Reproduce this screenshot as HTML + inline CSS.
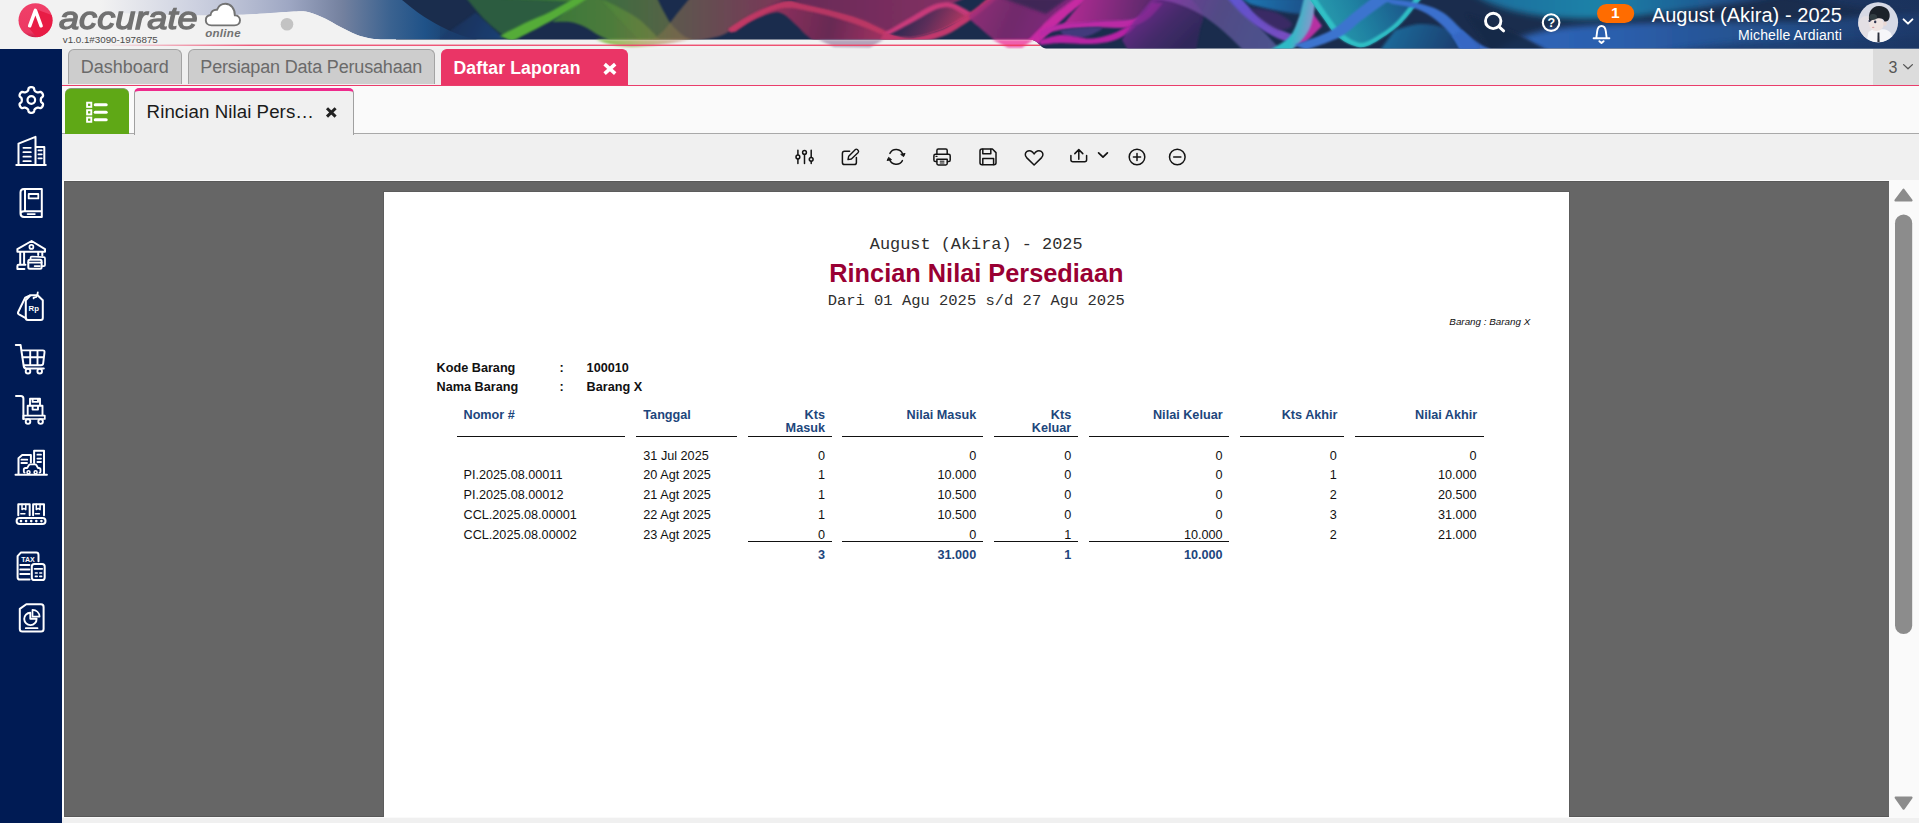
<!DOCTYPE html><html lang="id"><head><meta charset="utf-8"><title>Accurate Online - Rincian Nilai Persediaan</title><style>
*{box-sizing:border-box;margin:0;padding:0}
html,body{width:1919px;height:823px;overflow:hidden;background:#f0f0f0;font-family:"Liberation Sans",sans-serif;}
.abs{position:absolute}
.t{position:absolute;white-space:nowrap;line-height:0;height:0;}
.b{font-weight:bold}
.i{font-style:italic}
.m{font-family:"Liberation Mono",monospace}
.blue{color:#1d467c}
#hdr{position:absolute;left:0;top:0;width:1919px;height:49px;overflow:hidden}
#side{position:absolute;left:0;top:49px;width:62px;height:774px;background:#001b54}
#tabs{position:absolute;left:62px;top:49px;width:1857px;height:36px;background:#efefef}
.tab{position:absolute;top:49px;height:35px;border:1px solid #a3a3a3;border-bottom:none;border-radius:6px 6px 0 0;background:#cdcdcd;color:#6a6a6a;font-size:18px}
#pinkline{position:absolute;left:62px;top:85px;width:1857px;height:1px;background:#ea3d6b}
#subbar{position:absolute;left:62px;top:86px;width:1857px;height:48px;background:#fafafa;border-bottom:1px solid #a9a9a9}
#toolbar{position:absolute;left:62px;top:134px;width:1857px;height:47px;background:#f0f0f0;border-bottom:1px solid #fafafa}
#viewer{position:absolute;left:64px;top:181px;width:1825px;height:636px;background:#666;overflow:hidden;border-left:1px solid #5e5e5e;border-top:1px solid #595959}
#page{position:absolute;left:319px;top:10px;width:1185px;height:700px;background:#fff;box-shadow:0 0 0 1px #5c5c5c}
#sb{position:absolute;left:1889px;top:181px;width:30px;height:636px;background:#fafafa}
#bottom{position:absolute;left:62px;top:817px;width:1857px;height:6px;background:#f0f0f0;border-top:1px solid #fafafa}
.hl{position:absolute;height:1.4px;background:#111}
</style></head><body>
<svg id="hdr" class="abs" style="left:0;top:0" width="1919" height="49" viewBox="0 0 1919 49"><defs><clipPath id="cpM"><path d="M396 0H1919V48.5H1046C1040 48.5 1038 39.6 1030 39.6H396Z"/><path d="M100 0H402C405.0 2.3 413.7 9.7 420.0 14.0C426.3 18.3 433.3 22.5 440.0 26.0C446.7 29.5 453.7 32.7 460.0 35.0C466.3 37.3 475.0 38.8 478.0 39.6L387 39.6C384.5 39.5 377.2 39.6 372.0 38.8C366.8 37.9 361.3 36.5 356.0 34.5C350.7 32.5 345.2 29.5 340.0 26.8C334.8 24.1 330.2 20.9 325.0 18.5C319.8 16.1 314.2 13.5 309.0 12.3C303.8 11.1 304.3 11.1 294.0 11.5C283.7 11.9 262.7 13.9 247.0 14.6C231.3 15.2 224.5 15.7 200.0 15.4C175.5 15.1 116.7 13.4 100.0 13.0Z"/></clipPath><clipPath id="cpR"><rect x="1430" y="0" width="489" height="48.5"/></clipPath><filter id="b3" x="-5%" y="-60%" width="110%" height="220%"><feGaussianBlur stdDeviation="3"/></filter><filter id="b2" x="-5%" y="-60%" width="110%" height="220%"><feGaussianBlur stdDeviation="1.6"/></filter><filter id="b1" x="-5%" y="-60%" width="110%" height="220%"><feGaussianBlur stdDeviation="0.8"/></filter><linearGradient id="g1" gradientUnits="userSpaceOnUse" x1="1490" y1="0" x2="1919" y2="0"><stop offset="0" stop-color="#2f68bc"/><stop offset="0.3" stop-color="#2b5eac"/><stop offset="0.6" stop-color="#25528f"/><stop offset="1" stop-color="#20467f"/></linearGradient><linearGradient id="g2" gradientUnits="userSpaceOnUse" x1="1470" y1="0" x2="1790" y2="0"><stop offset="0" stop-color="#1c6c9c"/><stop offset="0.4" stop-color="#1a82a8"/><stop offset="0.8" stop-color="#21548f"/><stop offset="1" stop-color="#1e4279"/></linearGradient><linearGradient id="g3" gradientUnits="userSpaceOnUse" x1="1780" y1="0" x2="1919" y2="0"><stop offset="0" stop-color="#1a2f58" stop-opacity="0"/><stop offset="1" stop-color="#1a2f58" stop-opacity="0.55"/></linearGradient><linearGradient id="g4" gradientUnits="userSpaceOnUse" x1="100" y1="0" x2="478" y2="0"><stop offset="0" stop-color="#c4c9dd" stop-opacity="0"/><stop offset="0.25" stop-color="#c4c9dc" stop-opacity="0.8"/><stop offset="0.5" stop-color="#9ea7c3" stop-opacity="1"/><stop offset="0.64" stop-color="#74819f" stop-opacity="1"/><stop offset="0.77" stop-color="#3a6290" stop-opacity="1"/><stop offset="0.86" stop-color="#1f5288" stop-opacity="1"/><stop offset="0.94" stop-color="#1b3f6c" stop-opacity="1"/><stop offset="1" stop-color="#1a2d4d" stop-opacity="1"/></linearGradient><linearGradient id="g5" gradientUnits="userSpaceOnUse" x1="450" y1="14" x2="500" y2="40"><stop offset="0" stop-color="#1b3768"/><stop offset="1" stop-color="#2062b2"/></linearGradient><linearGradient id="g6" gradientUnits="userSpaceOnUse" x1="550" y1="0" x2="665" y2="0"><stop offset="0" stop-color="#438a36"/><stop offset="0.55" stop-color="#5a9038"/><stop offset="1" stop-color="#8a8a44"/></linearGradient><linearGradient id="g7" gradientUnits="userSpaceOnUse" x1="610" y1="0" x2="690" y2="0"><stop offset="0" stop-color="#5a9838"/><stop offset="1" stop-color="#8a8246"/></linearGradient><linearGradient id="g8" gradientUnits="userSpaceOnUse" x1="655" y1="0" x2="790" y2="0"><stop offset="0" stop-color="#86804a"/><stop offset="0.35" stop-color="#9a6a56"/><stop offset="0.7" stop-color="#b0505e"/><stop offset="1" stop-color="#c63c62"/></linearGradient><linearGradient id="g9" gradientUnits="userSpaceOnUse" x1="740" y1="10" x2="890" y2="40"><stop offset="0" stop-color="#d03864"/><stop offset="0.3" stop-color="#98305c"/><stop offset="0.6" stop-color="#742a56"/><stop offset="1" stop-color="#c03466"/></linearGradient><linearGradient id="g10" gradientUnits="userSpaceOnUse" x1="800" y1="0" x2="950" y2="0"><stop offset="0" stop-color="#9a2c5e"/><stop offset="1" stop-color="#c23272"/></linearGradient><linearGradient id="g11" gradientUnits="userSpaceOnUse" x1="905" y1="10" x2="950" y2="38"><stop offset="0" stop-color="#2b2950"/><stop offset="0.5" stop-color="#6a2f5c"/><stop offset="1" stop-color="#c03a64"/></linearGradient><linearGradient id="g12" gradientUnits="userSpaceOnUse" x1="965" y1="0" x2="1060" y2="40"><stop offset="0" stop-color="#c43088"/><stop offset="0.5" stop-color="#922c78"/><stop offset="1" stop-color="#a82c92"/></linearGradient><linearGradient id="g13" gradientUnits="userSpaceOnUse" x1="1075" y1="0" x2="1155" y2="18"><stop offset="0" stop-color="#c42c9c"/><stop offset="1" stop-color="#5c2a6c"/></linearGradient><linearGradient id="g14" gradientUnits="userSpaceOnUse" x1="1140" y1="0" x2="1185" y2="47"><stop offset="0" stop-color="#9c2eae"/><stop offset="0.55" stop-color="#5c2a7a"/><stop offset="1" stop-color="#3a2860"/></linearGradient><linearGradient id="g15" gradientUnits="userSpaceOnUse" x1="1160" y1="0" x2="1270" y2="47"><stop offset="0" stop-color="#a648c2"/><stop offset="0.5" stop-color="#7460aa"/><stop offset="1" stop-color="#6c6cb6"/></linearGradient><linearGradient id="g16" gradientUnits="userSpaceOnUse" x1="1229" y1="0" x2="1291" y2="43"><stop offset="0" stop-color="#6a5ce4"/><stop offset="1" stop-color="#8a50d0"/></linearGradient><linearGradient id="g17" gradientUnits="userSpaceOnUse" x1="1240" y1="0" x2="1300" y2="14"><stop offset="0" stop-color="#1c86c6"/><stop offset="1" stop-color="#1a5c98"/></linearGradient><linearGradient id="g18" gradientUnits="userSpaceOnUse" x1="1292" y1="30" x2="1312" y2="34"><stop offset="0" stop-color="#30d2da"/><stop offset="1" stop-color="#a2a8e2"/></linearGradient><linearGradient id="g19" gradientUnits="userSpaceOnUse" x1="1325" y1="42" x2="1410" y2="0"><stop offset="0" stop-color="#2cb4c0"/><stop offset="0.45" stop-color="#2090b0"/><stop offset="1" stop-color="#1b5a92"/></linearGradient><linearGradient id="g20" gradientUnits="userSpaceOnUse" x1="1400" y1="10" x2="1470" y2="40"><stop offset="0" stop-color="#1f7cb0"/><stop offset="1" stop-color="#1c3e74"/></linearGradient><linearGradient id="g21" gradientUnits="userSpaceOnUse" x1="600" y1="0" x2="690" y2="0"><stop offset="0" stop-color="#7cc043" stop-opacity="0.9"/><stop offset="0.45" stop-color="#a8a458" stop-opacity="0.75"/><stop offset="1" stop-color="#c0806a" stop-opacity="0.5"/></linearGradient><linearGradient id="pk" gradientUnits="userSpaceOnUse" x1="100" y1="0" x2="1040" y2="0"><stop offset="0" stop-color="#ee4a6e" stop-opacity="0"/><stop offset="0.16" stop-color="#ee4a6e" stop-opacity="1"/><stop offset="1" stop-color="#ee3a5e"/></linearGradient></defs><rect x="0" y="0" width="1919" height="49" fill="#f2f2f2"/><path d="M396 0H1919V48.5H1046C1040 48.5 1038 39.6 1030 39.6H396Z" fill="#1a2d4d"/><g clip-path="url(#cpM)"><g clip-path="url(#cpR)"><path d="M1490 56 C1520 30 1560 26 1620 24 C1700 20 1780 24 1830 20 C1870 16 1900 12 1930 8 V56Z" fill="url(#g1)" filter="url(#b3)"/><path d="M1470 -8 C1500 14 1560 24 1640 16 C1700 8 1740 4 1790 -8Z" fill="url(#g2)" filter="url(#b3)"/><path d="M1650 56 C1720 38 1800 42 1930 36 V56Z" fill="#1e3c70" opacity="0.8" filter="url(#b3)"/><path d="M1780 -8 H1930 V14 C1890 12 1840 6 1780 -8Z" fill="#1c3765" opacity="0.9" filter="url(#b3)"/><path d="M1466 14 C1490 20 1520 34 1550 52 H1490 C1484 40 1474 28 1466 14Z" fill="#182a4a" opacity="0.9" filter="url(#b2)"/><path d="M1780 0H1919V49H1780Z" fill="url(#g3)"/></g><path d="M100 0H402C405.0 2.3 413.7 9.7 420.0 14.0C426.3 18.3 433.3 22.5 440.0 26.0C446.7 29.5 453.7 32.7 460.0 35.0C466.3 37.3 475.0 38.8 478.0 39.6L387 39.6C384.5 39.5 377.2 39.6 372.0 38.8C366.8 37.9 361.3 36.5 356.0 34.5C350.7 32.5 345.2 29.5 340.0 26.8C334.8 24.1 330.2 20.9 325.0 18.5C319.8 16.1 314.2 13.5 309.0 12.3C303.8 11.1 304.3 11.1 294.0 11.5C283.7 11.9 262.7 13.9 247.0 14.6C231.3 15.2 224.5 15.7 200.0 15.4C175.5 15.1 116.7 13.4 100.0 13.0Z" fill="url(#g4)"/><path d="M438.0 39.6L476.0 12.5L505.0 39.6Z" fill="url(#g5)" opacity="0.45" filter="url(#b1)"/><path d="M466.0 -2.0C469.2 1.7 478.7 13.7 485.0 20.0C491.3 26.3 499.2 32.7 504.0 36.0C508.8 39.3 509.7 41.0 514.0 40.0C518.3 39.0 524.0 33.8 530.0 30.0C536.0 26.2 542.0 22.3 550.0 17.0C558.0 11.7 592.0 1.2 578.0 -2.0C564.0 -5.2 484.7 -2.0 466.0 -2.0Z" fill="#35733b" opacity="0.8" filter="url(#b1)"/><path d="M500 -2H600C603.3 -0.3 613.3 4.3 620.0 8.0C626.7 11.7 633.3 14.7 640.0 20.0C646.7 25.3 656.7 36.7 660.0 40.0L640 46L619 44C615.8 42.7 605.7 38.8 600.0 36.0C594.3 33.2 590.0 29.3 585.0 27.0C580.0 24.7 575.5 22.8 570.0 22.0C564.5 21.2 555.0 22.0 552.0 22.0L578 2Z" fill="url(#g6)" opacity="0.95" filter="url(#b1)"/><path d="M500.0 36.0C504.2 33.8 516.7 27.0 525.0 23.0C533.3 19.0 541.7 16.2 550.0 12.0C558.3 7.8 570.8 0.3 575.0 -2.0L588.0 -2.0C583.8 0.7 571.3 9.0 563.0 14.0C554.7 19.0 546.5 23.5 538.0 28.0C529.5 32.5 516.3 38.8 512.0 41.0Z" fill="#5fc234" filter="url(#b1)"/><path d="M600 -2H657C658.2 0.3 661.5 7.5 664.0 12.0C666.5 16.5 668.7 21.0 672.0 25.0C675.3 29.0 680.0 33.3 684.0 36.0C688.0 38.7 694.0 40.2 696.0 41.0H640Z" fill="url(#g7)" opacity="0.7" filter="url(#b1)"/><path d="M650 42C652.3 40.0 659.7 34.5 664.0 30.0C668.3 25.5 671.7 20.3 676.0 15.0C680.3 9.7 687.7 0.8 690.0 -2.0H790C786.0 -0.3 772.7 4.7 766.0 8.0C759.3 11.3 755.2 14.7 750.0 18.0C744.8 21.3 740.0 25.0 735.0 28.0C730.0 31.0 726.5 33.8 720.0 36.0C713.5 38.2 700.0 40.2 696.0 41.0Z" fill="url(#g8)" opacity="0.68" filter="url(#b1)"/><path d="M728 30C730.8 28.2 739.3 22.3 745.0 19.0C750.7 15.7 756.8 12.5 762.0 10.0C767.2 7.5 771.7 5.5 776.0 4.0C780.3 2.5 784.0 1.2 788.0 1.0C792.0 0.8 793.0 1.5 800.0 3.0C807.0 4.5 820.0 7.3 830.0 10.0C840.0 12.7 850.0 15.2 860.0 19.0C870.0 22.8 882.5 29.8 890.0 33.0C897.5 36.2 902.5 37.2 905.0 38.0L890 42H815C813.3 40.7 808.3 37.0 805.0 34.0C801.7 31.0 798.7 27.3 795.0 24.0C791.3 20.7 786.8 15.8 783.0 14.0C779.2 12.2 777.2 11.8 772.0 13.0C766.8 14.2 758.2 17.8 752.0 21.0C745.8 24.2 737.8 30.2 735.0 32.0Z" fill="url(#g9)" filter="url(#b1)"/><path d="M728.0 29.0C730.8 27.2 739.3 21.3 745.0 18.0C750.7 14.7 756.5 11.5 762.0 9.0C767.5 6.5 773.3 4.3 778.0 3.0C782.7 1.7 785.5 0.8 790.0 1.0C794.5 1.2 798.0 2.5 805.0 4.0C812.0 5.5 822.5 7.5 832.0 10.0C841.5 12.5 852.0 15.2 862.0 19.0C872.0 22.8 887.0 30.7 892.0 33.0L888.0 37.0C883.0 35.0 867.8 28.5 858.0 25.0C848.2 21.5 838.2 18.5 829.0 16.0C819.8 13.5 809.5 11.3 803.0 10.0C796.5 8.7 794.2 8.2 790.0 8.0C785.8 7.8 782.3 8.0 778.0 9.0C773.7 10.0 769.0 11.8 764.0 14.0C759.0 16.2 753.5 18.8 748.0 22.0C742.5 25.2 733.8 31.2 731.0 33.0Z" fill="#e03c6a" opacity="0.85" filter="url(#b1)"/><path d="M792 -2H965C962.3 -0.8 954.2 3.3 949.0 5.0C943.8 6.7 939.7 5.7 934.0 8.0C928.3 10.3 922.3 14.8 915.0 19.0C907.7 23.2 894.2 30.7 890.0 33.0C885.0 30.7 870.0 22.8 860.0 19.0C850.0 15.2 840.0 12.7 830.0 10.0C820.0 7.3 806.3 5.0 800.0 3.0C793.7 1.0 793.3 -1.2 792.0 -2.0Z" fill="url(#g10)" opacity="0.72" filter="url(#b1)"/><path d="M888.0 34.0C892.5 31.5 907.3 23.3 915.0 19.0C922.7 14.7 928.3 10.2 934.0 8.0C939.7 5.8 944.3 4.9 949.0 5.6C953.7 6.3 958.8 10.3 962.0 12.0C965.2 13.7 967.0 15.3 968.0 16.0L968.0 16.0C963.3 18.3 949.7 26.4 940.0 30.0C930.3 33.6 918.7 36.8 910.0 37.5C901.3 38.2 891.7 34.6 888.0 34.0Z" fill="url(#g11)"/><path d="M884.0 33.0C888.8 30.2 904.8 20.7 913.0 16.0C921.2 11.3 926.8 7.2 933.0 5.0C939.2 2.8 944.7 1.8 950.0 2.5C955.3 3.2 961.0 6.9 965.0 9.0C969.0 11.1 972.5 14.0 974.0 15.0L968.0 18.0C966.8 17.2 964.2 14.8 961.0 13.0C957.8 11.2 953.3 8.0 949.0 7.5C944.7 7.0 940.5 7.8 935.0 10.0C929.5 12.2 923.7 16.3 916.0 20.5C908.3 24.7 893.5 32.6 889.0 35.0Z" fill="#e43c82" filter="url(#b1)"/><path d="M884.0 33.0C888.3 33.8 900.7 38.0 910.0 37.5C919.3 37.0 932.0 32.9 940.0 30.0C948.0 27.1 952.2 23.5 958.0 20.0C963.8 16.5 970.0 12.7 975.0 9.0C980.0 5.3 985.8 -0.2 988.0 -2.0L998.0 -2.0C995.3 0.2 987.8 6.5 982.0 11.0C976.2 15.5 969.7 20.8 963.0 25.0C956.3 29.2 950.5 33.5 942.0 36.5C933.5 39.5 922.3 42.4 912.0 43.0C901.7 43.6 885.3 40.5 880.0 40.0Z" fill="#dc3a72" filter="url(#b1)"/><path d="M992 -2C989.5 -0.2 980.8 5.8 977.0 9.0C973.2 12.2 968.5 13.8 969.0 17.0C969.5 20.2 975.8 24.2 980.0 28.0C984.2 31.8 991.7 38.0 994.0 40.0L1012 48L1027 48C1029.2 45.5 1035.8 37.8 1040.0 33.0C1044.2 28.2 1047.7 23.2 1052.0 19.0C1056.3 14.8 1061.0 11.5 1066.0 8.0C1071.0 4.5 1079.3 -0.3 1082.0 -2.0Z" fill="url(#g12)" opacity="0.85" filter="url(#b1)"/><path d="M1002.0 -2.0L1046.0 14.0L1068.0 -2.0Z" fill="#3a2852" opacity="0.85" filter="url(#b2)"/><path d="M1020.0 48.0C1022.8 45.2 1031.8 36.2 1037.0 31.0C1042.2 25.8 1046.3 21.2 1051.0 17.0C1055.7 12.8 1060.8 9.2 1065.0 6.0C1069.2 2.8 1074.2 -0.7 1076.0 -2.0L1092.0 -2.0C1089.2 -0.2 1080.2 5.2 1075.0 9.0C1069.8 12.8 1065.5 16.8 1061.0 21.0C1056.5 25.2 1052.3 29.5 1048.0 34.0C1043.7 38.5 1037.2 45.7 1035.0 48.0Z" fill="#e22cb0" filter="url(#b1)"/><path d="M1085 -2H1162C1160.0 -0.3 1154.0 4.8 1150.0 8.0C1146.0 11.2 1143.0 14.8 1138.0 17.0C1133.0 19.2 1126.8 20.2 1120.0 21.0C1113.2 21.8 1106.7 21.2 1097.0 22.0C1087.3 22.8 1067.8 25.3 1062.0 26.0Z" fill="url(#g13)" filter="url(#b1)"/><path d="M1040.0 31.0C1043.3 29.8 1050.5 25.7 1060.0 24.0C1069.5 22.3 1084.5 22.0 1097.0 21.0C1109.5 20.0 1125.8 21.0 1135.0 18.0C1144.2 15.0 1149.2 5.5 1152.0 3.0L1163.0 3.0C1160.5 5.7 1153.8 14.9 1148.0 19.0C1142.2 23.1 1136.5 26.1 1128.0 27.5C1119.5 28.9 1108.3 27.1 1097.0 27.5C1085.7 27.9 1069.5 28.4 1060.0 30.0C1050.5 31.6 1043.3 35.8 1040.0 37.0Z" fill="#d42cb4" filter="url(#b1)"/><path d="M1060.0 30.5C1063.3 30.1 1073.0 28.4 1080.0 28.0C1087.0 27.6 1100.7 26.7 1102.0 28.0C1103.3 29.3 1093.7 34.3 1088.0 36.0C1082.3 37.7 1072.7 38.9 1068.0 38.0C1063.3 37.1 1061.3 31.8 1060.0 30.5Z" fill="#4a3c84" filter="url(#b1)"/><path d="M1040.0 40.0C1043.3 39.2 1053.7 35.5 1060.0 35.0C1066.3 34.5 1072.7 36.4 1078.0 37.0C1083.3 37.6 1086.3 39.0 1092.0 38.5C1097.7 38.0 1105.7 36.2 1112.0 34.0C1118.3 31.8 1127.0 26.5 1130.0 25.0L1136.0 26.0C1134.5 27.3 1131.0 31.5 1127.0 34.0C1123.0 36.5 1118.2 39.3 1112.0 41.0C1105.8 42.7 1098.7 43.7 1090.0 44.0C1081.3 44.3 1068.3 42.8 1060.0 43.0C1051.7 43.2 1043.3 44.7 1040.0 45.0Z" fill="#d022b2" filter="url(#b1)"/><path d="M1122 40C1123.7 37.3 1127.8 29.8 1132.0 24.0C1136.2 18.2 1143.5 9.3 1147.0 5.0C1150.5 0.7 1152.0 -0.8 1153.0 -2.0H1190C1192.2 0.7 1201.3 8.7 1203.0 14.0C1204.7 19.3 1201.2 24.0 1200.0 30.0C1198.8 36.0 1196.7 46.7 1196.0 50.0H1128Z" fill="url(#g14)" opacity="0.78" filter="url(#b1)"/><path d="M1152.0 -2.0C1155.8 -1.2 1167.0 0.3 1175.0 3.0C1183.0 5.7 1192.2 9.5 1200.0 14.0C1207.8 18.5 1214.8 24.0 1222.0 30.0C1229.2 36.0 1239.5 46.7 1243.0 50.0L1281.0 50.0C1277.8 46.7 1268.0 36.0 1262.0 30.0C1256.0 24.0 1250.5 19.3 1245.0 14.0C1239.5 8.7 1231.7 0.7 1229.0 -2.0Z" fill="url(#g15)" opacity="0.72" filter="url(#b1)"/><path d="M1227.0 -2.0C1229.5 0.7 1236.8 9.2 1242.0 14.0C1247.2 18.8 1252.5 23.2 1258.0 27.0C1263.5 30.8 1269.5 34.3 1275.0 37.0C1280.5 39.7 1288.3 42.0 1291.0 43.0L1300.0 37.0C1298.0 36.3 1293.0 35.2 1288.0 33.0C1283.0 30.8 1275.7 27.5 1270.0 24.0C1264.3 20.5 1258.8 16.3 1254.0 12.0C1249.2 7.7 1243.2 0.3 1241.0 -2.0Z" fill="url(#g16)" filter="url(#b1)"/><path d="M1241 -2H1322L1300 14C1280 12 1262 8 1250 4Z" fill="url(#g17)" filter="url(#b2)"/><path d="M1250.0 8.0C1254.2 8.7 1268.0 9.3 1275.0 12.0C1282.0 14.7 1291.2 21.0 1292.0 24.0C1292.8 27.0 1285.0 30.7 1280.0 30.0C1275.0 29.3 1267.0 23.7 1262.0 20.0C1257.0 16.3 1252.0 10.0 1250.0 8.0Z" fill="#4a2a70" opacity="0.8" filter="url(#b2)"/><path d="M1300.0 18.0L1312.0 12.0L1322.0 26.0L1306.0 42.0L1290.0 47.0Z" fill="#d030b0" filter="url(#b1)"/><path d="M1270.0 50.0C1272.7 48.3 1282.0 43.3 1286.0 40.0C1290.0 36.7 1291.7 34.3 1294.0 30.0C1296.3 25.7 1298.3 19.3 1300.0 14.0C1301.7 8.7 1303.3 0.7 1304.0 -2.0L1316.0 -2.0C1315.7 0.3 1315.0 7.0 1314.0 12.0C1313.0 17.0 1312.0 23.3 1310.0 28.0C1308.0 32.7 1305.0 36.3 1302.0 40.0C1299.0 43.7 1293.7 48.3 1292.0 50.0Z" fill="url(#g18)" filter="url(#b1)"/><path d="M1309 -2C1311.5 1.5 1319.5 12.8 1324.0 19.0C1328.5 25.2 1331.3 30.7 1336.0 35.0C1340.7 39.3 1346.8 43.2 1352.0 45.0C1357.2 46.8 1360.3 48.3 1367.0 46.0C1373.7 43.7 1385.7 35.5 1392.0 31.0C1398.3 26.5 1400.8 23.5 1405.0 19.0C1409.2 14.5 1414.2 7.5 1417.0 4.0C1419.8 0.5 1421.2 -1.0 1422.0 -2.0Z" fill="url(#g19)"/><path d="M1309.0 -2.0C1311.5 1.5 1319.5 12.8 1324.0 19.0C1328.5 25.2 1331.3 30.7 1336.0 35.0C1340.7 39.3 1346.8 43.2 1352.0 45.0C1357.2 46.8 1360.3 48.3 1367.0 46.0C1373.7 43.7 1385.7 35.5 1392.0 31.0C1398.3 26.5 1400.8 23.5 1405.0 19.0C1409.2 14.5 1414.2 7.5 1417.0 4.0C1419.8 0.5 1421.2 -1.0 1422.0 -2.0L1414.0 -2.0C1413.5 -1.0 1413.3 0.7 1411.0 4.0C1408.7 7.3 1403.8 13.8 1400.0 18.0C1396.2 22.2 1393.7 25.0 1388.0 29.0C1382.3 33.0 1371.7 40.0 1366.0 42.0C1360.3 44.0 1358.2 42.7 1354.0 41.0C1349.8 39.3 1345.2 36.0 1341.0 32.0C1336.8 28.0 1333.2 22.7 1329.0 17.0C1324.8 11.3 1318.2 1.2 1316.0 -2.0Z" fill="#34dada" filter="url(#b1)"/><path d="M1395 30C1399.2 29.0 1411.7 24.3 1420.0 24.0C1428.3 23.7 1436.7 25.3 1445.0 28.0C1453.3 30.7 1463.8 36.3 1470.0 40.0C1476.2 43.7 1480.0 48.3 1482.0 50.0H1380Z" fill="url(#g20)" opacity="0.9" filter="url(#b2)"/><path d="M1294.0 45.0C1300.0 42.7 1320.2 36.3 1330.0 31.0C1339.8 25.7 1346.0 18.5 1353.0 13.0C1360.0 7.5 1368.8 0.5 1372.0 -2.0L1394.0 -2.0C1392.3 -1.0 1389.3 0.3 1384.0 4.0C1378.7 7.7 1369.3 14.5 1362.0 20.0C1354.7 25.5 1349.3 32.0 1340.0 37.0C1330.7 42.0 1311.7 47.8 1306.0 50.0Z" fill="#4280e4" filter="url(#b1)"/><path d="M1380.0 -2.0C1386.2 -1.2 1406.7 0.7 1417.0 3.0C1427.3 5.3 1434.5 7.5 1442.0 12.0C1449.5 16.5 1455.7 23.7 1462.0 30.0C1468.3 36.3 1477.0 46.7 1480.0 50.0L1460.0 50.0C1458.7 47.7 1456.0 41.0 1452.0 36.0C1448.0 31.0 1441.8 24.5 1436.0 20.0C1430.2 15.5 1424.3 11.7 1417.0 9.0C1409.7 6.3 1396.2 4.8 1392.0 4.0Z" fill="#3f7ce2" filter="url(#b1)"/><path d="M1462.0 30.0C1465.0 32.3 1475.0 40.7 1480.0 44.0C1485.0 47.3 1490.0 49.0 1492.0 50.0L1464.0 50.0C1463.7 50.0 1464.0 52.3 1462.0 50.0C1460.0 47.7 1453.7 38.3 1452.0 36.0Z" fill="#3a72d8" opacity="0.9" filter="url(#b1)"/><rect x="440" y="0" width="1040" height="49" fill="#1a2d4d" opacity="0.14"/></g><rect x="380" y="39.6" width="660" height="5" fill="#f9f9f9" opacity="0.0"/><path d="M596 39.6H690C670 44 650 47 632 47C618 47 606 44 596 39.6Z" fill="url(#g21)" filter="url(#b1)"/><path d="M818.0 39.6L884.0 39.6L870.0 47.6L834.0 47.0Z" fill="#7a5a86" opacity="0.5" filter="url(#b1)"/><path d="M992.0 39.6L1034.0 39.6L1022.0 47.8L1008.0 47.8Z" fill="#f03a9c" opacity="0.8" filter="url(#b1)"/><rect x="100" y="44.6" width="940" height="1.3" fill="url(#pk)"/></svg>
<svg class="abs" style="left:0;top:0" width="1919" height="48" viewBox="0 0 1919 48">
<defs><clipPath id="lgc"><circle cx="35.5" cy="20.2" r="17"/></clipPath><linearGradient id="lgg" x1="0" y1="0" x2="0" y2="1"><stop offset="0" stop-color="#f04069"/><stop offset="0.85" stop-color="#ec3862"/><stop offset="1" stop-color="#c8204a"/></linearGradient><radialGradient id="avg" cx="0.5" cy="0.35" r="0.6"><stop offset="0" stop-color="#3a3f4c"/><stop offset="0.55" stop-color="#6b7080"/><stop offset="1" stop-color="#d9dbe4"/></radialGradient><clipPath id="avc"><circle cx="1878.1" cy="22.3" r="19.9"/></clipPath><filter id="avb"><feGaussianBlur stdDeviation="0.55"/></filter></defs>
<circle cx="35.5" cy="20.2" r="17" fill="url(#lgg)"/>
<g clip-path="url(#lgc)"><path d="M35.4 9L43.5 12L60 18V45H43L28.6 27.6Z" fill="#e81c45"/></g>
<path d="M29.7 25.8L35.4 10.4L41.1 25.8" fill="none" stroke="#fff" stroke-width="3.5" stroke-linecap="round" stroke-linejoin="round"/>
<path d="M211.6 25.4H234.4C238 25.4 240 23 240 20.2C240 17.2 237.6 15.2 234.8 15.4C235 9 231 3.8 225.4 3.8C221.6 3.8 218.4 6.2 217 9.8C213.6 9.4 210.6 11.8 210.6 15C207.6 15.4 205.8 17.6 205.8 20.2C205.8 23 208 25.4 211.6 25.4Z" fill="#fff" stroke="#737373" stroke-width="1.9" stroke-linejoin="round"/>
<circle cx="287" cy="24.2" r="6.3" fill="#c3c3c3"/>
<circle cx="1493.2" cy="20.9" r="7.7" fill="none" stroke="#fff" stroke-width="2.9"/><path d="M1498.9 26.7L1503.6 30.8" stroke="#fff" stroke-width="3" stroke-linecap="round"/>
<circle cx="1551.1" cy="22.6" r="8.3" fill="none" stroke="#fff" stroke-width="2.1"/>
<text x="1551.2" y="27.3" text-anchor="middle" font-family="Liberation Sans, sans-serif" font-weight="bold" font-size="12.5" fill="#fff">?</text>
<rect x="1597" y="4" width="37.2" height="19" rx="9.5" fill="#ff6c00"/>
<text x="1615.4" y="18.2" text-anchor="middle" font-family="Liberation Sans, sans-serif" font-weight="bold" font-size="15.5" fill="#fff">1</text>
<path d="M1593.6 38.3H1609.4M1596.3 38L1597.2 31.2C1597.6 28 1599 26 1601.5 26C1604 26 1605.4 28 1605.8 31.2L1606.7 38M1599.4 41.2L1601.5 43L1603.6 41.2" fill="none" stroke="#fff" stroke-width="1.9" stroke-linecap="round" stroke-linejoin="round"/>
<circle cx="1878.1" cy="22.3" r="20" fill="#d6d9e5"/>
<g clip-path="url(#avc)"><g filter="url(#avb)"><ellipse cx="1866" cy="30" rx="9" ry="14" fill="#e3dfe4"/><path d="M1866 44L1868.5 32Q1873 28 1879 29.5Q1887 28 1891 33L1894 44Z" fill="#f6f6f9"/><ellipse cx="1876.4" cy="24" rx="7.4" ry="7" fill="#efe3e1"/><ellipse cx="1885" cy="23.4" rx="1.8" ry="2.4" fill="#ead8d4"/><path d="M1869.4 21.5C1867.5 13 1871.5 6 1879 6C1886.5 6 1890.5 11 1889.6 17C1889 20.5 1887 22 1884.5 21.5C1883.5 19 1881 17.8 1877 18.6C1873.5 19.4 1871 21 1869.4 21.5Z" fill="#1d212c"/><ellipse cx="1873" cy="17" rx="4" ry="3" fill="#3c4a4c" opacity="0.7"/><ellipse cx="1869.5" cy="20.9" rx="1" ry="1.2" fill="#3a3f5c"/><ellipse cx="1875.2" cy="21.9" rx="1.2" ry="1.3" fill="#2e3350"/><ellipse cx="1873.2" cy="27.4" rx="1.2" ry="0.6" fill="#d9a0a4"/><path d="M1877.6 32.4L1879.4 32.6L1879.6 42H1877.4Z" fill="#2a2d3a"/></g></g>
<path d="M1903.6 19.4L1908 23.6L1912.4 19.4" fill="none" stroke="#fff" stroke-width="2" stroke-linecap="round" stroke-linejoin="round"/>
</svg>
<span class="t i" style="font-size:31.00px;top:18.66px;left:58.60px;color:#717171;-webkit-text-stroke:1.3px #717171;transform:scaleX(1.165);transform-origin:0 0;">accurate</span>
<span class="t b i" style="font-size:11.50px;top:33.12px;left:205.20px;color:#717171;letter-spacing:0.3px;">online</span>
<span class="t " style="font-size:9.80px;top:39.60px;left:62.80px;color:#4a4a4a;letter-spacing:-0.02px;">v1.0.1#3090-1976875</span>
<span class="t " style="font-size:20.00px;top:14.87px;right:77.00px;color:#fff;letter-spacing:0.06px;">August (Akira) - 2025</span>
<span class="t " style="font-size:14.00px;top:34.65px;right:77.00px;color:#fff;letter-spacing:0.12px;">Michelle Ardianti</span>
<div id="side"></div>
<div class="abs" style="left:62px;top:49px;width:2px;height:774px;background:#fdfdfd"></div>
<svg class="abs" style="left:0;top:49px" width="62" height="774" viewBox="0 49 62 774" fill="none" stroke="#fff" stroke-width="2" stroke-linecap="round" stroke-linejoin="round">
<path d="M40.80 100.00 L40.82 99.50 L40.89 98.99 L41.00 98.46 L41.22 97.89 L42.12 97.10 L42.96 96.21 L43.04 95.49 L42.96 94.81 L42.76 94.16 L42.47 93.55 L42.09 92.99 L41.62 92.50 L41.07 92.09 L40.41 91.79 L39.22 92.08 L38.08 92.47 L37.48 92.36 L36.97 92.20 L36.49 92.00 L36.05 91.77 L35.63 91.51 L35.22 91.20 L34.82 90.83 L34.43 90.36 L34.20 89.18 L33.85 88.01 L33.27 87.58 L32.63 87.31 L31.97 87.15 L31.30 87.10 L30.63 87.15 L29.97 87.31 L29.33 87.58 L28.75 88.01 L28.40 89.18 L28.17 90.36 L27.78 90.83 L27.38 91.20 L26.97 91.51 L26.55 91.77 L26.11 92.00 L25.63 92.20 L25.12 92.36 L24.52 92.47 L23.38 92.08 L22.19 91.79 L21.53 92.09 L20.98 92.50 L20.51 92.99 L20.13 93.55 L19.84 94.16 L19.64 94.81 L19.56 95.49 L19.64 96.21 L20.48 97.10 L21.38 97.89 L21.60 98.46 L21.71 98.99 L21.78 99.50 L21.80 100.00 L21.78 100.50 L21.71 101.01 L21.60 101.54 L21.38 102.11 L20.48 102.90 L19.64 103.79 L19.56 104.51 L19.64 105.19 L19.84 105.84 L20.13 106.45 L20.51 107.01 L20.98 107.50 L21.53 107.91 L22.19 108.21 L23.38 107.92 L24.52 107.53 L25.12 107.64 L25.63 107.80 L26.11 108.00 L26.55 108.23 L26.97 108.49 L27.38 108.80 L27.78 109.17 L28.17 109.64 L28.40 110.82 L28.75 111.99 L29.33 112.42 L29.97 112.69 L30.63 112.85 L31.30 112.90 L31.97 112.85 L32.63 112.69 L33.27 112.42 L33.85 111.99 L34.20 110.82 L34.43 109.64 L34.82 109.17 L35.22 108.80 L35.63 108.49 L36.05 108.23 L36.49 108.00 L36.97 107.80 L37.48 107.64 L38.08 107.53 L39.22 107.92 L40.41 108.21 L41.07 107.91 L41.62 107.50 L42.09 107.01 L42.47 106.45 L42.76 105.84 L42.96 105.19 L43.04 104.51 L42.96 103.79 L42.12 102.90 L41.22 102.11 L41.00 101.54 L40.89 101.01 L40.82 100.50Z" stroke-width="2.3"/>
<circle cx="31.3" cy="100" r="3.8" stroke-width="2.2"/>
<path d="M16.3 165H45.8M18.5 165V143.6L35.5 136.9V165M35.5 147H44.3V165"/>
<path d="M23.4 147.8H30.8M23.4 152.2H30.8M23.4 156.7H30.8M23.4 161.2H30.8M38.4 150.3H41.8M38.4 154.3H41.8M38.4 158.3H41.8" stroke-width="1.8"/>
<path d="M41.8 211.2V188.9H24Q20.5 188.9 20.5 192.4V213.6Q20.5 217 24 217H41.8V211.2H24Q20.6 211.4 20.5 214M25 189V211"/>
<rect x="28.7" y="194" width="9.6" height="4.4" stroke-width="1.8"/>
<path d="M27.6 214.1H34.8" stroke-width="1.8"/>
<path d="M17.4 251.8V249.1L31.6 241L45 249.1V251.8Z"/>
<circle cx="31.4" cy="246.9" r="2" stroke-width="1.7"/>
<path d="M20.2 252V263.7M24.1 252V263.7M38.2 252V255M42.3 252V255.5"/>
<path d="M25.4 264.7H18.6Q17.4 264.7 17.4 266V269H24.4"/>
<rect x="28.3" y="259.8" width="13.3" height="9" rx="1.5"/>
<path d="M28.3 262.6H41.6M34.6 266.1H39.9" stroke-width="1.7"/>
<path d="M30.6 259V257.6Q30.6 256.5 31.8 256.5L43.8 257.2Q45 257.3 45 258.5V265Q45 266.2 43.8 266.2H42.4" stroke-width="1.7"/>
<path d="M25.8 300.2L30.4 295.2H37.6L42.8 300.2V318Q42.8 320 40.8 320H27.8Q25.8 320 25.8 318Z"/>
<path d="M29.5 295.6L25.2 297.6L18.2 312Q17.5 313.6 19 314.4L26.2 318.4"/>
<path d="M33.6 298.4Q33.2 297.6 34.6 297.4Q36.5 297.6 37.2 295.5L37.8 292.4" stroke-width="1.8"/>
<text x="28.6" y="311" font-family="Liberation Sans, sans-serif" font-size="7.8" font-weight="bold" fill="#fff" stroke="none">Rp</text>
<path d="M15.8 345.1H20.6L23.7 366Q24.1 368.6 26.5 368.6H43.8"/>
<path d="M21.8 350.4H42.8Q44.8 350.4 44.5 352.4L43.2 363.4Q43 365.2 41 365.2H24M22.7 357.3H43.8M30.2 350.4V365.2M37.5 350.4V365.2" stroke-width="1.9"/>
<circle cx="28" cy="371.2" r="2.3" stroke-width="1.9"/><circle cx="39.7" cy="371.2" r="2.3" stroke-width="1.9"/>
<path d="M16 396.1H20.9Q23.4 396.1 23.4 398.6V418.9"/>
<rect x="23.4" y="415.6" width="21.4" height="3.4" stroke-width="1.7"/>
<circle cx="28" cy="421.6" r="2.3" stroke-width="1.9"/><circle cx="40.6" cy="421.6" r="2.3" stroke-width="1.9"/>
<path d="M27.7 415V405.8H42.5V415M30 405.8V398.8H40V405.8M32.6 405.8V409.6H38V405.8M32.6 398.8V401.9H38V398.8" stroke-width="1.9"/>
<path d="M15.5 474.8H46.9M18.5 474.8V458.2L22.2 455.1H30.9V462.5M34.1 463V450.7H44V474.8"/>
<path d="M21.4 459.7H27.3M21.4 463H27M37.4 454.7H41M37.4 458.6H41M37.4 462H41" stroke-width="1.8"/>
<path d="M24.6 472.6Q23.8 472.6 23.8 471.6V469.6Q23.8 468 25.6 468H27.2L28.8 465.2Q29.3 464.4 30.3 464.4H35Q36 464.4 36.5 465.2L38 468H38.8Q40.5 468 40.5 469.6V471.6Q40.5 472.6 39.6 472.6" stroke-width="1.8"/>
<circle cx="28.5" cy="472.3" r="1.5" stroke-width="1.5"/><circle cx="35.6" cy="472.3" r="1.5" stroke-width="1.5"/>
<rect x="16.6" y="518.1" width="28.9" height="6" rx="3"/>
<circle cx="21" cy="521.1" r="1.3" fill="#fff" stroke="none"/>
<circle cx="26.1" cy="521.1" r="1.3" fill="#fff" stroke="none"/>
<circle cx="31.2" cy="521.1" r="1.3" fill="#fff" stroke="none"/>
<circle cx="36.3" cy="521.1" r="1.3" fill="#fff" stroke="none"/>
<circle cx="41.4" cy="521.1" r="1.3" fill="#fff" stroke="none"/>
<path d="M18.3 515.2V504.2H29.7V515.2M33.1 515.2V504.2H44V515.2"/>
<path d="M22 504.2V509.6L23.9 508.4L25.8 509.6V504.2M20.8 513.8H24.9M36.3 504.2V509.6L38.2 508.4L40.1 509.6V504.2M35.4 513.8H39.4" stroke-width="1.5"/>
<path d="M29.6 579.6H20Q17.6 579.6 17.6 577.2V556.2L20.8 552.6H36.2Q38.5 552.6 38.5 555V561.3"/>
<path d="M20.2 565H29.5M20.2 569.5H29.5M20.2 574H29.5" stroke-width="1.8"/>
<text x="21.2" y="561.5" font-family="Liberation Sans, sans-serif" font-size="6.3" font-weight="bold" fill="#fff" stroke="none" textLength="13.6" lengthAdjust="spacingAndGlyphs">TAX</text>
<rect x="31.8" y="564" width="12.9" height="16" rx="2.6"/>
<path d="M34.6 568.8H42.2" stroke-width="1.8"/>
<path d="M35.4 573H37.2M39.8 573H41.6M35.4 576.4H37.2M39.8 576.4H41.6" stroke-width="1.6"/>
<path d="M19.8 608.9L26.3 604.3H41Q43.6 604.3 43.6 606.9V629Q43.6 631.5 41 631.5H22.4Q19.8 631.5 19.8 629Z"/>
<path d="M30.3 612.7A6.2 6.2 0 1 0 36.6 618.7H30.3Z" stroke-width="1.9"/>
<path d="M32.5 616.6V609.8A7 7 0 0 1 39.6 616.6Z" stroke-width="1.7"/>
<path d="M25.8 628.2H37.5" stroke-width="1.8"/>
</svg>
<div id="tabs"></div>
<div class="tab" style="left:68px;width:114px"></div>
<div class="tab" style="left:188px;width:247px"></div>
<div class="tab" style="left:441px;width:187px;height:36.5px;background:#ea3566;border-color:#ea3566"></div>
<div class="abs" style="left:1873px;top:49px;width:46px;height:36px;background:#dcdcdc"></div>
<div id="pinkline"></div>
<div id="subbar"></div>
<div id="toolbar"></div>
<div class="abs" style="left:64.5px;top:88px;width:64px;height:46px;background:#5fa816;border-radius:6px 6px 0 0;border-top:1px solid #8a9a7a"></div>
<div class="abs" style="left:134px;top:88px;width:220px;height:47px;background:#f0f0f0;border:1px solid #a0a0a0;border-bottom:none;border-top:3px solid #ee2a8c;border-radius:5px 5px 0 0"></div>
<svg class="abs" style="left:780px;top:140px" width="420" height="34" viewBox="780 140 420 34" fill="none" stroke="#141414" stroke-width="1.5" stroke-linecap="round" stroke-linejoin="round">
<path d="M797.9 150.3V154.6M797.9 159.2V163.6M804.5 154.8V163.6M811.2 150.3V157M811.2 161.6V163.6"/>
<circle cx="797.9" cy="157" r="1.9"/><circle cx="804.5" cy="152.4" r="1.9"/><circle cx="811.2" cy="159.3" r="1.9"/>
<path d="M849.6 151.2H844.6Q842.4 151.2 842.4 153.4V162.4Q842.4 164.6 844.6 164.6H854.2Q856.4 164.6 856.4 162.4V157.4"/>
<path d="M848 159.6L848.7 156.2L855.4 149.5Q856.3 148.7 857.3 149.6L858.2 150.5Q859 151.5 858.2 152.4L851.4 159Z" stroke-width="1.4"/>
<path d="M889.6 159.6A7 7 0 0 0 902.4 160.6M902.8 154.4A7 7 0 0 0 889.9 153.4" />
<path d="M901 154.6L903.6 156.6L904.9 153.8Z" fill="#141414" stroke-width="1"/><path d="M887.3 160.2L888.6 157.4L891.2 159.4Z" fill="#141414" stroke-width="1"/>
<path d="M936.6 161.6H935.4Q933.9 161.6 933.9 160V155.8Q933.9 154.2 935.5 154.2H948.6Q950.2 154.2 950.2 155.8V160Q950.2 161.6 948.7 161.6H947.6"/>
<path d="M936.9 154V150.4Q936.9 149 938.3 149H945.8Q947.2 149 947.2 150.4V154M936.9 159.2H947.2V163.6Q947.2 165 945.8 165H938.3Q936.9 165 936.9 163.6Z"/>
<path d="M940.2 161.2H944M940.2 163H944" stroke-width="1"/><path d="M936 156.4H937" stroke-width="1.2"/>
<path d="M982 149H992.4L996 152.6V162.8Q996 164.8 994 164.8H982Q980 164.8 980 162.8V151Q980 149 982 149Z"/>
<path d="M982.8 149.2V153.8H990.8V149.2M982.8 164.6V158.6H993.6V164.6"/>
<path d="M1034.1 165L1026.6 157.6C1024.6 155.4 1025 152.6 1027 151.4C1029.4 150 1032.4 151 1034.1 154C1035.8 151 1038.8 150 1041.2 151.4C1043.2 152.6 1043.6 155.4 1041.6 157.6Z"/>
<path d="M1070.9 155.4V159.8Q1070.9 161.8 1072.9 161.8H1084.6Q1086.6 161.8 1086.6 159.8V155.4M1078.8 159.2V150M1074.8 153.6L1078.8 149.6L1082.8 153.6"/>
<path d="M1098.6 152.8L1103 157.2L1107.4 152.8" stroke-width="1.7"/>
<circle cx="1137" cy="157" r="7.8"/><path d="M1133.4 157H1140.6M1137 153.4V160.6"/>
<circle cx="1177.3" cy="157" r="7.8"/><path d="M1173.7 157H1180.9"/>
</svg>
<span class="t " style="font-size:18.00px;top:67.16px;left:80.80px;color:#6a6a6a;">Dashboard</span>
<span class="t " style="font-size:18.00px;top:67.16px;left:200.30px;color:#6a6a6a;letter-spacing:-0.17px;">Persiapan Data Perusahaan</span>
<span class="t b" style="font-size:17.60px;top:67.90px;left:453.50px;color:#fff;letter-spacing:0.14px;">Daftar Laporan</span>
<span class="t " style="font-size:18.70px;top:112.32px;left:146.60px;color:#1a1a1a;letter-spacing:0.07px;">Rincian Nilai Pers…</span>
<span class="t " style="font-size:16.00px;top:67.66px;left:1888.60px;color:#555;">3</span>
<div id="viewer"><div class="abs" style="left:0;bottom:0;width:1825px;height:1px;background:#585858"></div><div id="page"></div></div>
<div id="sb"></div>
<div id="bottom"></div>
<svg class="abs" style="left:62px;top:48px" width="1857" height="775" viewBox="62 48 1857 775">
<path d="M604.6 64.2L615.2 73.6M615.2 64.2L604.6 73.6" stroke="#fff" stroke-width="3.6" stroke-linecap="butt"/>
<path d="M327 108.2L335.6 116.6M335.6 108.2L327 116.6" stroke="#222" stroke-width="3" stroke-linecap="butt"/>
<path d="M1903.6 64.6L1908 68.8L1912.4 64.6" fill="none" stroke="#555" stroke-width="1.3" stroke-linecap="round" stroke-linejoin="round"/>
<rect x="87.1" y="102.7" width="4.2" height="4.2" fill="none" stroke="#fff" stroke-width="1.9"/>
<path d="M95.2 104.8H106.2" stroke="#fff" stroke-width="3" stroke-linecap="round"/>
<rect x="87.1" y="110.2" width="4.2" height="4.2" fill="none" stroke="#fff" stroke-width="1.9"/>
<path d="M95.2 112.3H106.2" stroke="#fff" stroke-width="3" stroke-linecap="round"/>
<rect x="87.1" y="117.6" width="4.2" height="4.2" fill="none" stroke="#fff" stroke-width="1.9"/>
<path d="M95.2 119.7H106.2" stroke="#fff" stroke-width="3" stroke-linecap="round"/>
<path d="M1903.5 189.6L1911.6 200.4H1895.4Z" fill="#8c8c8c" stroke="#8c8c8c" stroke-width="2" stroke-linejoin="round"/>
<rect x="1895" y="214.6" width="17.2" height="419.4" rx="8.6" fill="#8c8c8c"/>
<path d="M1903.6 808.8L1911.6 797.6H1895.6Z" fill="#8c8c8c" stroke="#8c8c8c" stroke-width="2" stroke-linejoin="round"/>
</svg>
<span class="t m" style="font-size:16.89px;top:244.70px;left:976.20px;transform:translateX(-50%);color:#2e2e2e;">August (Akira) - 2025</span>
<span class="t b" style="font-size:25.33px;top:273.42px;left:976.40px;transform:translateX(-50%);color:#990033;">Rincian Nilai Persediaan</span>
<span class="t m" style="font-size:15.48px;top:301.17px;left:976.20px;transform:translateX(-50%);color:#2e2e2e;">Dari 01 Agu 2025 s/d 27 Agu 2025</span>
<span class="t i" style="font-size:9.85px;top:321.59px;right:388.70px;color:#111;">Barang : Barang X</span>
<span class="t b" style="font-size:12.67px;top:367.61px;left:436.60px;color:#111;">Kode Barang</span>
<span class="t b" style="font-size:12.67px;top:367.61px;left:559.50px;color:#111;">:</span>
<span class="t b" style="font-size:12.67px;top:367.61px;left:586.60px;color:#111;">100010</span>
<span class="t b" style="font-size:12.67px;top:387.01px;left:436.60px;color:#111;">Nama Barang</span>
<span class="t b" style="font-size:12.67px;top:387.01px;left:559.50px;color:#111;">:</span>
<span class="t b" style="font-size:12.67px;top:387.01px;left:586.60px;color:#111;">Barang X</span>
<span class="t b blue" style="font-size:12.67px;top:414.91px;left:463.50px;">Nomor #</span>
<span class="t b blue" style="font-size:12.67px;top:414.91px;left:643.30px;">Tanggal</span>
<span class="t b blue" style="font-size:12.67px;top:414.91px;right:1094.00px;">Kts</span>
<span class="t b blue" style="font-size:12.67px;top:428.31px;right:1094.00px;">Masuk</span>
<span class="t b blue" style="font-size:12.67px;top:414.91px;right:942.80px;">Nilai Masuk</span>
<span class="t b blue" style="font-size:12.67px;top:414.91px;right:847.80px;">Kts</span>
<span class="t b blue" style="font-size:12.67px;top:428.31px;right:847.80px;">Keluar</span>
<span class="t b blue" style="font-size:12.67px;top:414.91px;right:696.40px;">Nilai Keluar</span>
<span class="t b blue" style="font-size:12.67px;top:414.91px;right:581.50px;">Kts Akhir</span>
<span class="t b blue" style="font-size:12.67px;top:414.91px;right:441.80px;">Nilai Akhir</span>
<div class="hl" style="left:456.5px;top:435.8px;width:168.7px"></div>
<div class="hl" style="left:636.0px;top:435.8px;width:100.8px"></div>
<div class="hl" style="left:747.7px;top:435.8px;width:84.1px"></div>
<div class="hl" style="left:842.4px;top:435.8px;width:140.3px"></div>
<div class="hl" style="left:993.7px;top:435.8px;width:84.1px"></div>
<div class="hl" style="left:1089.0px;top:435.8px;width:140.0px"></div>
<div class="hl" style="left:1240.0px;top:435.8px;width:104.0px"></div>
<div class="hl" style="left:1355.0px;top:435.8px;width:129.0px"></div>
<div class="hl" style="left:747.7px;top:540.6px;width:84.1px"></div>
<div class="hl" style="left:842.4px;top:540.6px;width:140.3px"></div>
<div class="hl" style="left:993.7px;top:540.6px;width:84.1px"></div>
<div class="hl" style="left:1089.0px;top:540.6px;width:140.0px"></div>
<span class="t " style="font-size:12.67px;top:455.61px;left:643.30px;color:#111;">31 Jul 2025</span>
<span class="t " style="font-size:12.67px;top:455.61px;right:1094.00px;color:#111;">0</span>
<span class="t " style="font-size:12.67px;top:455.61px;right:942.80px;color:#111;">0</span>
<span class="t " style="font-size:12.67px;top:455.61px;right:847.80px;color:#111;">0</span>
<span class="t " style="font-size:12.67px;top:455.61px;right:696.40px;color:#111;">0</span>
<span class="t " style="font-size:12.67px;top:455.61px;right:582.20px;color:#111;">0</span>
<span class="t " style="font-size:12.67px;top:455.61px;right:442.40px;color:#111;">0</span>
<span class="t " style="font-size:12.67px;top:475.41px;left:463.50px;color:#111;">PI.2025.08.00011</span>
<span class="t " style="font-size:12.67px;top:475.41px;left:643.30px;color:#111;">20 Agt 2025</span>
<span class="t " style="font-size:12.67px;top:475.41px;right:1094.00px;color:#111;">1</span>
<span class="t " style="font-size:12.67px;top:475.41px;right:942.80px;color:#111;">10.000</span>
<span class="t " style="font-size:12.67px;top:475.41px;right:847.80px;color:#111;">0</span>
<span class="t " style="font-size:12.67px;top:475.41px;right:696.40px;color:#111;">0</span>
<span class="t " style="font-size:12.67px;top:475.41px;right:582.20px;color:#111;">1</span>
<span class="t " style="font-size:12.67px;top:475.41px;right:442.40px;color:#111;">10.000</span>
<span class="t " style="font-size:12.67px;top:495.21px;left:463.50px;color:#111;">PI.2025.08.00012</span>
<span class="t " style="font-size:12.67px;top:495.21px;left:643.30px;color:#111;">21 Agt 2025</span>
<span class="t " style="font-size:12.67px;top:495.21px;right:1094.00px;color:#111;">1</span>
<span class="t " style="font-size:12.67px;top:495.21px;right:942.80px;color:#111;">10.500</span>
<span class="t " style="font-size:12.67px;top:495.21px;right:847.80px;color:#111;">0</span>
<span class="t " style="font-size:12.67px;top:495.21px;right:696.40px;color:#111;">0</span>
<span class="t " style="font-size:12.67px;top:495.21px;right:582.20px;color:#111;">2</span>
<span class="t " style="font-size:12.67px;top:495.21px;right:442.40px;color:#111;">20.500</span>
<span class="t " style="font-size:12.67px;top:515.01px;left:463.50px;color:#111;">CCL.2025.08.00001</span>
<span class="t " style="font-size:12.67px;top:515.01px;left:643.30px;color:#111;">22 Agt 2025</span>
<span class="t " style="font-size:12.67px;top:515.01px;right:1094.00px;color:#111;">1</span>
<span class="t " style="font-size:12.67px;top:515.01px;right:942.80px;color:#111;">10.500</span>
<span class="t " style="font-size:12.67px;top:515.01px;right:847.80px;color:#111;">0</span>
<span class="t " style="font-size:12.67px;top:515.01px;right:696.40px;color:#111;">0</span>
<span class="t " style="font-size:12.67px;top:515.01px;right:582.20px;color:#111;">3</span>
<span class="t " style="font-size:12.67px;top:515.01px;right:442.40px;color:#111;">31.000</span>
<span class="t " style="font-size:12.67px;top:534.81px;left:463.50px;color:#111;">CCL.2025.08.00002</span>
<span class="t " style="font-size:12.67px;top:534.81px;left:643.30px;color:#111;">23 Agt 2025</span>
<span class="t " style="font-size:12.67px;top:534.81px;right:1094.00px;color:#111;">0</span>
<span class="t " style="font-size:12.67px;top:534.81px;right:942.80px;color:#111;">0</span>
<span class="t " style="font-size:12.67px;top:534.81px;right:847.80px;color:#111;">1</span>
<span class="t " style="font-size:12.67px;top:534.81px;right:696.40px;color:#111;">10.000</span>
<span class="t " style="font-size:12.67px;top:534.81px;right:582.20px;color:#111;">2</span>
<span class="t " style="font-size:12.67px;top:534.81px;right:442.40px;color:#111;">21.000</span>
<span class="t b blue" style="font-size:12.67px;top:554.61px;right:1094.00px;">3</span>
<span class="t b blue" style="font-size:12.67px;top:554.61px;right:942.80px;">31.000</span>
<span class="t b blue" style="font-size:12.67px;top:554.61px;right:847.80px;">1</span>
<span class="t b blue" style="font-size:12.67px;top:554.61px;right:696.40px;">10.000</span>
</body></html>
